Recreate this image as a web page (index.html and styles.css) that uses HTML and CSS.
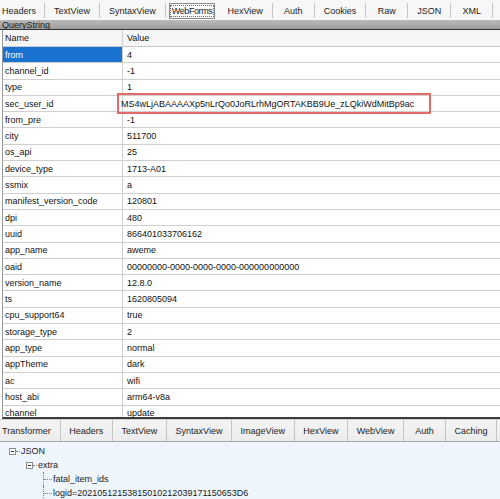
FILE: index.html
```html
<!DOCTYPE html>
<html>
<head>
<meta charset="utf-8">
<title>WebForms</title>
<link rel="stylesheet" href="styles.css">
</head>
<body>
<div class="app">
  <nav class="tabs tabs-top">
    <span class="tab">Headers</span>
    <span class="tab">TextView</span>
    <span class="tab">SyntaxView</span>
    <span class="tab active"><span class="focus">WebForms</span></span>
    <span class="tab">HexView</span>
    <span class="tab">Auth</span>
    <span class="tab">Cookies</span>
    <span class="tab">Raw</span>
    <span class="tab">JSON</span>
    <span class="tab">XML</span>
  </nav>
  <div class="section-title">QueryString</div>
  <div class="grid">
    <div class="row head"><div class="c-name">Name</div><div class="c-val">Value</div></div>
    <div class="row selected"><div class="c-name">from</div><div class="c-val">4</div></div>
    <div class="row"><div class="c-name">channel_id</div><div class="c-val">-1</div></div>
    <div class="row"><div class="c-name">type</div><div class="c-val">1</div></div>
    <div class="row"><div class="c-name">sec_user_id</div><div class="c-val marked"><span class="mark-text">MS4wLjABAAAAXp5nLrQo0JoRLrhMgORTAKBB9Ue_zLQkiWdMitBp9ac</span><span class="mark-box"></span></div></div>
    <div class="row"><div class="c-name">from_pre</div><div class="c-val">-1</div></div>
    <div class="row"><div class="c-name">city</div><div class="c-val">511700</div></div>
    <div class="row"><div class="c-name">os_api</div><div class="c-val">25</div></div>
    <div class="row"><div class="c-name">device_type</div><div class="c-val">1713-A01</div></div>
    <div class="row"><div class="c-name">ssmix</div><div class="c-val">a</div></div>
    <div class="row"><div class="c-name">manifest_version_code</div><div class="c-val">120801</div></div>
    <div class="row"><div class="c-name">dpi</div><div class="c-val">480</div></div>
    <div class="row"><div class="c-name">uuid</div><div class="c-val">866401033706162</div></div>
    <div class="row"><div class="c-name">app_name</div><div class="c-val">aweme</div></div>
    <div class="row"><div class="c-name">oaid</div><div class="c-val">00000000-0000-0000-0000-000000000000</div></div>
    <div class="row"><div class="c-name">version_name</div><div class="c-val">12.8.0</div></div>
    <div class="row"><div class="c-name">ts</div><div class="c-val">1620805094</div></div>
    <div class="row"><div class="c-name">cpu_support64</div><div class="c-val">true</div></div>
    <div class="row"><div class="c-name">storage_type</div><div class="c-val">2</div></div>
    <div class="row"><div class="c-name">app_type</div><div class="c-val">normal</div></div>
    <div class="row"><div class="c-name">appTheme</div><div class="c-val">dark</div></div>
    <div class="row"><div class="c-name">ac</div><div class="c-val">wifi</div></div>
    <div class="row"><div class="c-name">host_abi</div><div class="c-val">arm64-v8a</div></div>
    <div class="row"><div class="c-name">channel</div><div class="c-val">update</div></div>
  </div>
  <nav class="tabs tabs-bottom">
    <span class="tab">Transformer</span>
    <span class="tab">Headers</span>
    <span class="tab">TextView</span>
    <span class="tab">SyntaxView</span>
    <span class="tab">ImageView</span>
    <span class="tab">HexView</span>
    <span class="tab">WebView</span>
    <span class="tab">Auth</span>
    <span class="tab">Caching</span>
    <span class="tab clipped">C</span>
  </nav>
  <div class="tree">
    <div class="node lvl0"><span class="tbox"></span><span class="hstub"></span><span class="label">JSON</span></div>
    <div class="node lvl1"><span class="tbox"></span><span class="hstub"></span><span class="label">extra</span></div>
    <div class="node lvl2"><span class="leaf"></span><span class="label">fatal_item_ids</span></div>
    <div class="node lvl2"><span class="leaf"></span><span class="label">logid=20210512153815010212039171150653D6</span></div>
  </div>
</div>
</body>
</html>
```

FILE: styles.css
```css
* { box-sizing: border-box; }
html, body { margin: 0; padding: 0; }
body {
  width: 500px;
  height: 499px;
  overflow: hidden;
  background: #ffffff;
  font-family: "Liberation Sans", Arial, sans-serif;
  font-size: 9px;
  color: #111;
}
.app {
  height: 499px;
  display: flex;
  flex-direction: column;
}

/* tab strips */
.tabs {
  display: flex;
  flex: none;
  white-space: nowrap;
  overflow: hidden;
}
.tab {
  flex: none;
  display: flex;
  align-items: center;
  justify-content: center;
  padding: 0 9px;
  min-width: 42px;
  border-right: 1px solid #c4c4c4;
  color: #222;
}
.tab:first-child { padding-left: 2px; padding-right: 8px; justify-content: flex-start; }
.tabs-top {
  height: 20px;
  background: #f7f7f7;
  padding-top: 1px;
}
.tabs-top .tab { margin: 2px 0 2px; }
.tabs-top .tab.active {
  border: 1px solid #8c8c8c;
  margin: 2px 3px 1px;
  padding: 1px 0;
  min-width: 0;
  background: #fbfbfb;
}
.tab.active .focus {
  border: 1px dotted #6c6c6c;
  padding: 0 1px;
  letter-spacing: -0.4px;
  height: 100%;
  display: flex;
  align-items: center;
}
.tabs-bottom {
  height: 23px;
  background: linear-gradient(#f4f4f4, #ececec);
  border-top: 1px solid #d0d0d0;
  border-bottom: 1px solid #a8a8a8;
}
.tabs-bottom .tab { padding: 0 8.6px; }
.tabs-bottom .tab:first-child { padding-left: 2px; padding-right: 9px; }
.tabs-bottom .tab.clipped {
  flex: 1 1 auto;
  min-width: 0;
  border-right: none;
  justify-content: flex-start;
  padding: 0 0 0 5px;
}

/* section header */
.section-title {
  flex: none;
  height: 10px;
  line-height: 10px;
  padding-left: 2px;
  background: linear-gradient(#b9b9b9, #9d9d9d);
  border-bottom: 1px solid #303030;
  color: #1a1a1a;
  overflow: hidden;
}

/* grid */
.grid {
  flex: 1;
  min-height: 0;
  overflow: hidden;
  margin-left: 2px;
  border-left: 1px solid #9a9a9a;
  border-bottom: 2px solid #3a3a3a;
}
.row {
  display: grid;
  grid-template-columns: 120px 1fr;
  height: 16.3px;
  border-bottom: 1px solid #cfcfcf;
}
.row.head {
  height: 17px;
  background: #f6f6f6;
  border-bottom: 1px solid #c8c8c8;
}
.c-name, .c-val {
  display: flex;
  align-items: center;
  white-space: nowrap;
  overflow: visible;
}
.c-name {
  padding-left: 2px;
  border-right: 1px solid #cfcfcf;
}
.c-val { padding-left: 4px; position: relative; }
.row.selected .c-name {
  background: #1a72d0;
  color: #ffffff;
}
.c-val.marked .mark-text { margin-left: -6px; }
.mark-box {
  position: absolute;
  left: -6px;
  top: -3px;
  width: 314px;
  height: 21px;
  border: 2px solid #e46a6a;
  pointer-events: none;
}

/* tree */
.tree {
  flex: none;
  height: 57px;
  background: #eef5fd;
  padding-top: 2px;
  overflow: hidden;
}
.node {
  display: flex;
  align-items: center;
  height: 14px;
  white-space: nowrap;
}
.lvl0 { padding-left: 9px; }
.lvl1 { padding-left: 26px; }
.lvl2 { padding-left: 43px; }
.tbox {
  width: 7px;
  height: 7px;
  border: 1px solid #8a8a8a;
  background: #ffffff;
  position: relative;
  flex: none;
}
.tbox::after {
  content: "";
  position: absolute;
  left: 1px;
  top: 2px;
  width: 3px;
  height: 1px;
  background: #333;
}
.hstub {
  width: 4px;
  border-top: 1px dotted #808080;
  margin-right: 1px;
}
.leaf {
  align-self: stretch;
  width: 10px;
  border-left: 1px dotted #808080;
  position: relative;
  flex: none;
}
.leaf::after {
  content: "";
  position: absolute;
  left: 0;
  top: 7px;
  width: 8px;
  border-top: 1px dotted #808080;
}
.label { color: #1a1a1a; }
```
